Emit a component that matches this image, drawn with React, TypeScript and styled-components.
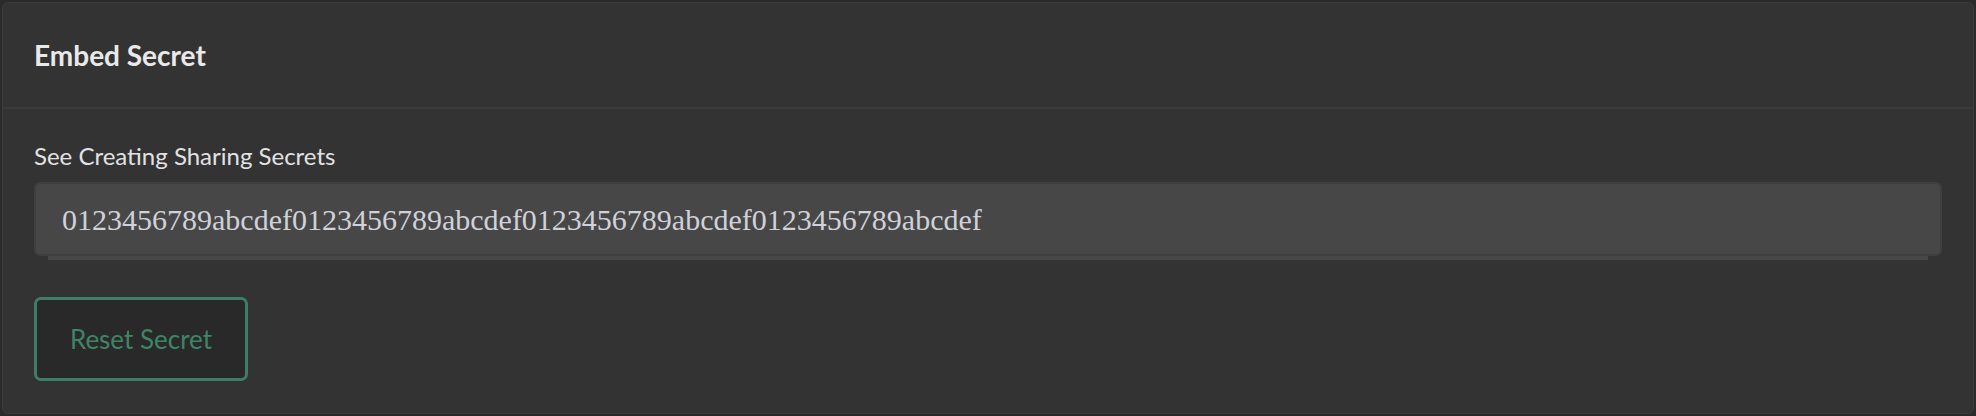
import React from "react";
import styled, { createGlobalStyle } from "styled-components";

const Global = createGlobalStyle`
  html, body {
    margin: 0;
    padding: 0;
    background: #2b2b2b;
  }
  body {
    font-family: Lato, "Open Sans", sans-serif;
  }
  * { box-sizing: border-box; }
`;

const Card = styled.section`
  margin: 2px;
  height: 412px;
  background: #333333;
  border: 1px solid #3b3b3b;
  border-radius: 6px;
  display: flex;
  flex-direction: column;
`;

const Header = styled.header`
  height: 106px;
  flex: none;
  display: flex;
  align-items: center;
  padding: 0 31px;
  border-bottom: 2px solid #3a3a3a;
`;

const Title = styled.h2`
  margin: 0;
  font-family: Lato, sans-serif;
  font-weight: 700;
  font-size: 28px;
  color: #e9e9e9;
`;

const Body = styled.div`
  display: flex;
  flex-direction: column;
  align-items: flex-start;
  padding: 32px 31px 32px;
`;

const Label = styled.label`
  font-family: Lato, sans-serif;
  font-size: 24px;
  line-height: 29px;
  color: #e2e2e2;
  margin-bottom: 12px;
`;

const SecretInput = styled.input`
  width: 100%;
  height: 74px;
  padding: 2px 26px 0;
  background: #474747;
  border: 2px solid #3f3f3f;
  border-radius: 6px;
  box-shadow: 0 18px 0 -14px #474747;
  font-family: "Liberation Serif", "Times New Roman", serif;
  font-size: 30px;
  color: #d0d1d9;
  outline: none;
`;

const ResetButton = styled.button`
  margin-top: 41px;
  width: 214px;
  height: 84px;
  background: #292929;
  border: 3px solid #3d7e66;
  border-radius: 7px;
  font-family: Lato, sans-serif;
  font-size: 26px;
  color: #3f8467;
  cursor: pointer;
`;

export default function App() {
  return (
    <>
      <Global />
      <Card>
        <Header>
          <Title>Embed Secret</Title>
        </Header>
        <Body>
          <Label>See Creating Sharing Secrets</Label>
          <SecretInput
            readOnly
            value="0123456789abcdef0123456789abcdef0123456789abcdef0123456789abcdef"
          />
          <ResetButton>Reset Secret</ResetButton>
        </Body>
      </Card>
    </>
  );
}
